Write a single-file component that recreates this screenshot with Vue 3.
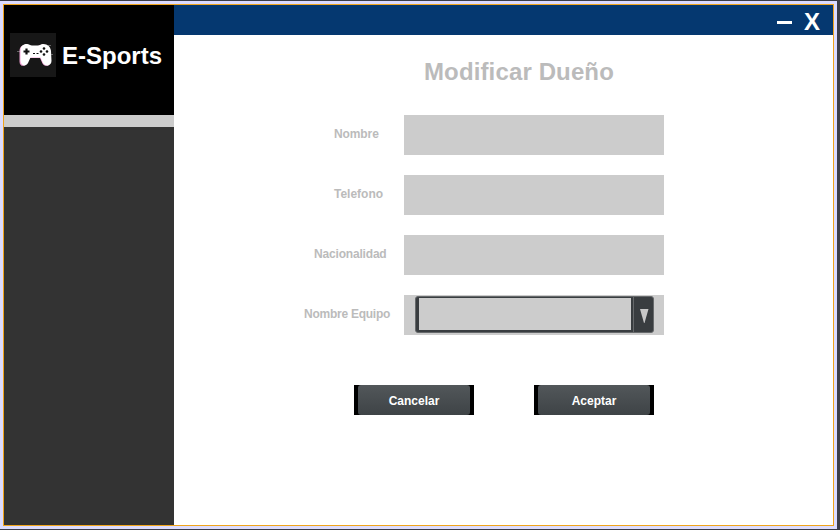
<script setup>
const fields = [
  { id: 'nombre', label: 'Nombre', type: 'text' },
  { id: 'telefono', label: 'Telefono', type: 'text' },
  { id: 'nacionalidad', label: 'Nacionalidad', type: 'text' },
  { id: 'equipo', label: 'Nombre Equipo', type: 'select' },
]
</script>

<template>
  <div class="desktop">
    <div class="window">
      <aside class="sidebar">
        <div class="brand">
          <svg class="logo" width="46" height="44" viewBox="0 0 46 44">
            <rect width="46" height="44" fill="#171717" />
            <path d="M10 18.500H7M41 12.500H38M41 21.500h2" stroke="#777" stroke-width=".8" />
            <path d="M10 18C10 13 13 11 17 11c2 0 3 1.500 5 1.500h6c2 0 3-1.500 5-1.500 5 0 7.500 3 8 7v10c0 5-6 6-8 2l-2.500-5.500h-11L17 30c-2 4-7 3-7-2Z" fill="#f0a4d6" transform="translate(-.5 .4)" />
            <path d="M10.500 18C10.500 13 13 11 17 11c2 0 3 1.500 5 1.500h6c2 0 3-1.500 5-1.500 5 0 7.500 3 8 7l.5 10c0 5-6.500 6-8.500 2l-2.500-5.500h-10L18 30c-2 4-7 3-7.500-2Z" fill="#fff" />
            <path d="M16.500 15.500v6M13.500 18.500h6" stroke="#111" stroke-width="2.200" />
            <path d="M23 20.500h2M26.500 20.500h2" stroke="#111" />
            <g fill="#111">
              <circle cx="34" cy="15.500" r="1.300" /><circle cx="34" cy="21.500" r="1.300" />
              <circle cx="31" cy="18.500" r="1.300" /><circle cx="37" cy="18.500" r="1.300" />
            </g>
          </svg>
          <span class="brand-name">E-Sports</span>
        </div>
        <div class="divider"></div>
      </aside>
      <main class="main">
        <header class="titlebar">
          <button class="minimize" aria-label="Minimizar"><span></span></button>
          <button class="close">X</button>
        </header>
        <h1>Modificar Dueño</h1>
        <form class="form" @submit.prevent>
          <div v-for="f in fields" :key="f.id" class="row">
            <label :class="['label', f.id]">{{ f.label }}</label>
            <div class="field">
              <div v-if="f.type === 'select'" class="combo">
                <div class="combo-value"></div>
                <div class="combo-button">
                  <svg width="9" height="14" viewBox="0 0 9 14"><path d="M0 0h8.500L4.500 14h-.5Z" fill="#c8c8c8" /></svg>
                </div>
              </div>
            </div>
          </div>
          <div class="actions">
            <button class="action cancel"><span>Cancelar</span></button>
            <button class="action accept"><span>Aceptar</span></button>
          </div>
        </form>
      </main>
    </div>
  </div>
</template>

<style>
body { margin: 0; }
</style>

<style scoped>
* { box-sizing: border-box; }
button { border: 0; padding: 0; margin: 0; background: none; color: #fff; font: inherit; }
svg { display: block; }
.desktop {
  width: 840px;
  height: 530px;
  padding: 1px 3px 1px 0;
  background: #3b3d48;
  font-family: "Liberation Sans", Arial, sans-serif;
  font-weight: bold;
  overflow: hidden;
}
.window {
  display: flex;
  height: 528px;
  border: 3px solid #dcdcff;
  background: #f0a41c;
  padding: 1px;
}
.sidebar { width: 170px; height: 520px; background: #333; }
.brand { display: flex; height: 110px; padding: 28px 0 0 6px; background: #000; color: #fff; }
.logo { flex: none; }
.brand-name { margin-left: 6px; font-size: 24px; line-height: 46px; white-space: nowrap; }
.divider { height: 12px; background: #ccc; }
.main { flex: 1; background: #fff; }
.titlebar { display: flex; justify-content: flex-end; height: 30px; padding-right: 13px; background: #053870; }
.minimize { display: flex; width: 15px; padding-top: 16px; margin-right: 12px; }
.minimize span { width: 15px; height: 3px; background: #fff; }
.close { width: 16px; font-size: 24px; line-height: 33px; }
h1 { margin: 23px 0 0 250px; height: 57px; font-size: 24px; line-height: 28px; letter-spacing: 0.13px; color: #bbb; }
.row { display: flex; height: 40px; margin-bottom: 20px; }
.label { width: 230px; font-size: 12px; line-height: 38px; color: #bbb; white-space: nowrap; }
.nombre { padding-left: 160px; letter-spacing: -0.1px; }
.telefono { padding-left: 160px; }
.nacionalidad { padding-left: 140px; letter-spacing: -0.18px; }
.equipo { padding-left: 130px; letter-spacing: -0.25px; }
.field { width: 260px; height: 40px; padding: 1px 10px 0 11px; background: #ccc; }
.combo {
  display: flex;
  width: 239px;
  height: 37px;
  padding: 1px 0 1px 3px;
  border: 1px solid #66696b;
  border-radius: 3px;
  background: #393d40;
}
.combo-value { width: 212px; height: 32px; flex: none; background: #ccc; }
.combo-button { display: flex; flex: 1; height: 35px; margin: -1px 0 0 2px; padding: 12px 0 0 6px; border-left: 1px solid #66696b; }
.actions { display: flex; gap: 60px; padding: 30px 0 0 180px; }
.action { width: 120px; height: 30px; padding: 0 4px; background: #000; font-size: 12px; }
.action span { display: block; height: 30px; line-height: 32px; border-radius: 3px; background: linear-gradient(#52575a, #3e4346); }
</style>
